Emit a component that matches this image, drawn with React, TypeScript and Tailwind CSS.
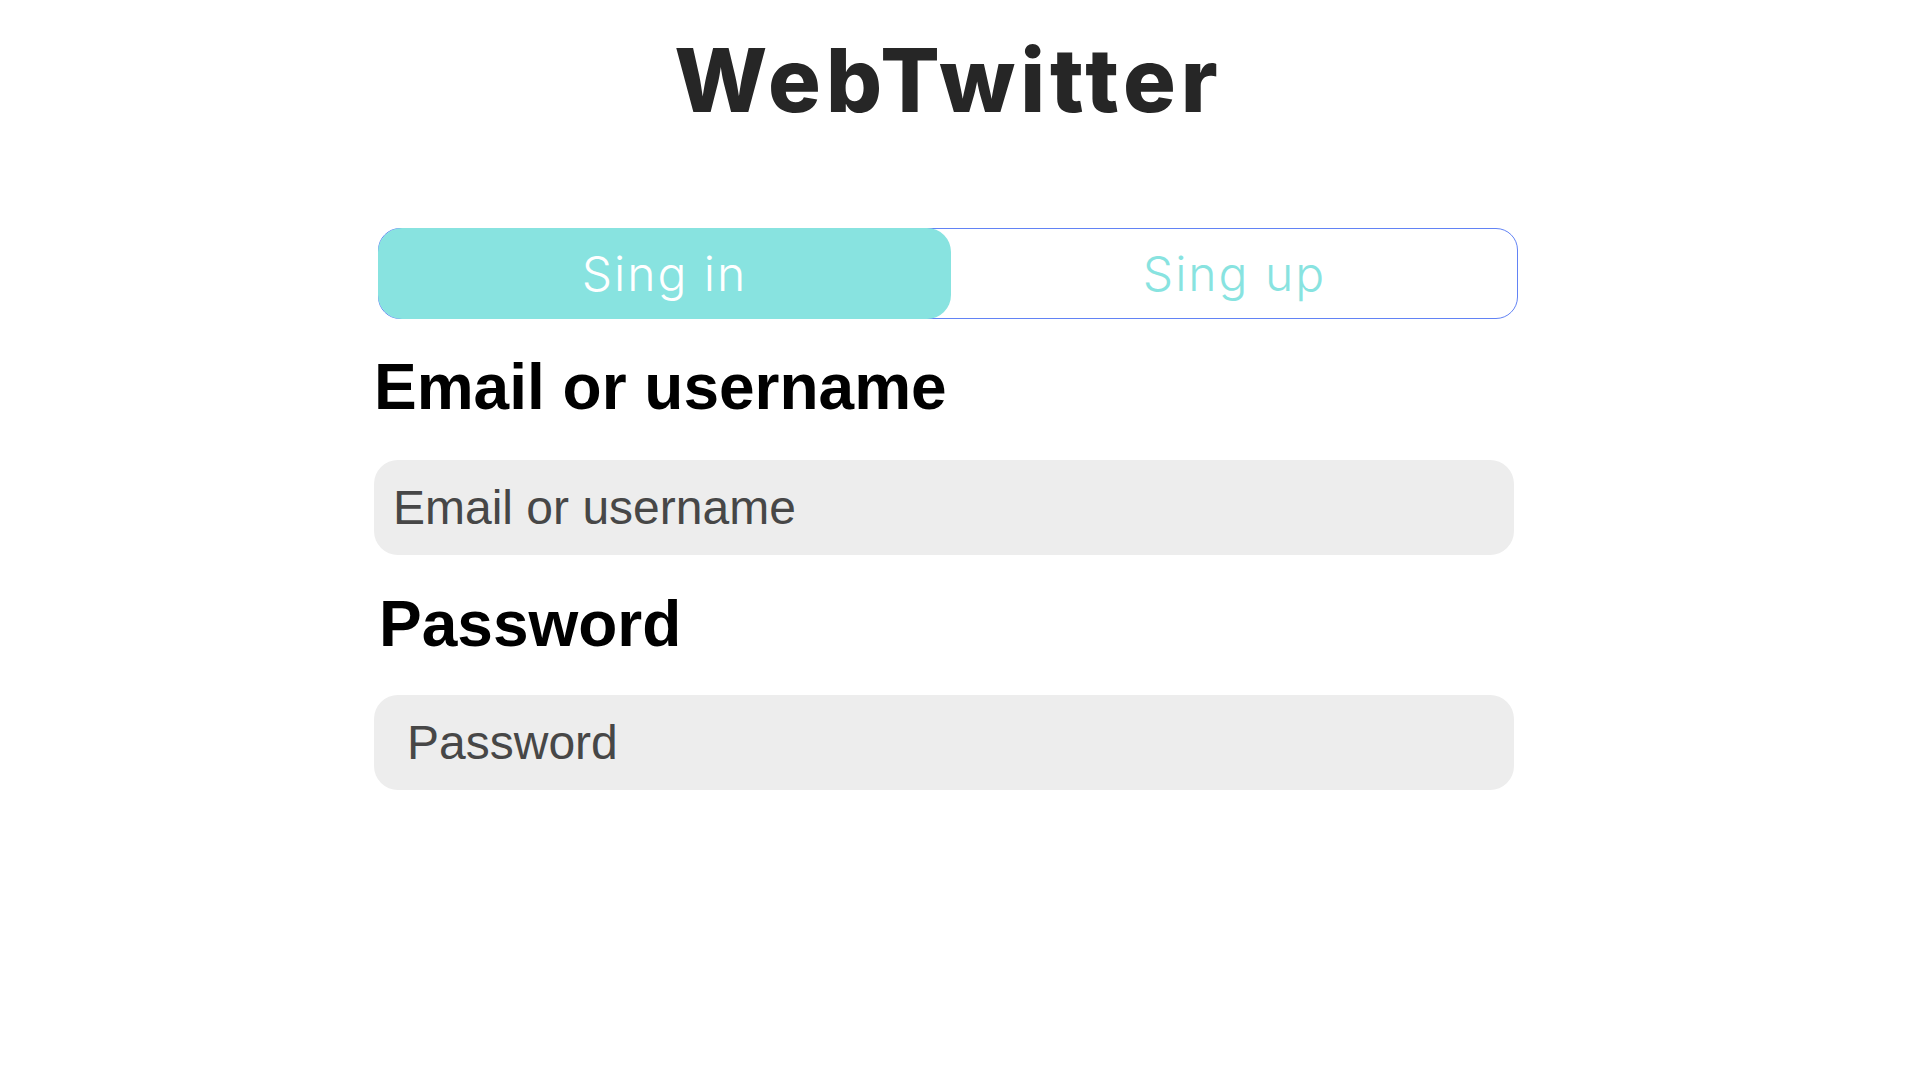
import { useState } from "react";

const sans = "font-['Liberation_Sans',Arial,sans-serif]";

export default function App() {
  const [tab, setTab] = useState<"in" | "up">("in");

  return (
    <div className="min-h-screen bg-white">
      <div className="ml-[374px] w-[1144px] flex flex-col">
        <h1 className="mt-[30px] pl-[5px] text-center text-[88px] leading-[1.15] font-extrabold tracking-[5px] text-[#262626] font-['Inter',sans-serif]">
          WebTwitter
        </h1>

        <div className="ml-[4px] mt-[97px] flex h-[91px] w-[1140px] rounded-[22px] border border-[#6283f5] font-['Inter',sans-serif]">
          <button
            onClick={() => setTab("in")}
            className={`-my-px -ml-px flex w-[573px] items-center justify-center rounded-[24px] text-[48px] font-light tracking-[2px] ${tab === "in" ? "bg-[#88e3e0] text-white" : "text-[#88e3e0]"}`}
          >
            Sing in
          </button>
          <button
            onClick={() => setTab("up")}
            className={`-my-px -mr-px flex flex-1 items-center justify-center rounded-[24px] text-[48px] font-light tracking-[2px] ${tab === "up" ? "bg-[#88e3e0] text-white" : "text-[#88e3e0]"}`}
          >
            Sing up
          </button>
        </div>

        <label className={`mt-[32px] text-[64px] leading-[1.15] font-bold text-black ${sans}`}>Email or username</label>
        <input
          placeholder="Email or username"
          className={`mt-[35px] h-[95px] w-[1140px] rounded-[24px] bg-[#ededed] pl-[19px] text-[48px] text-[#333] outline-none placeholder:text-[#474747] ${sans}`}
        />

        <label className={`ml-[5px] mt-[33px] text-[64px] leading-[1.15] font-bold text-black ${sans}`}>Password</label>
        <input
          type="password"
          placeholder="Password"
          className={`mt-[34px] h-[95px] w-[1140px] rounded-[24px] bg-[#ededed] pl-[33px] text-[48px] text-[#333] outline-none placeholder:text-[#474747] ${sans}`}
        />
      </div>
    </div>
  );
}
